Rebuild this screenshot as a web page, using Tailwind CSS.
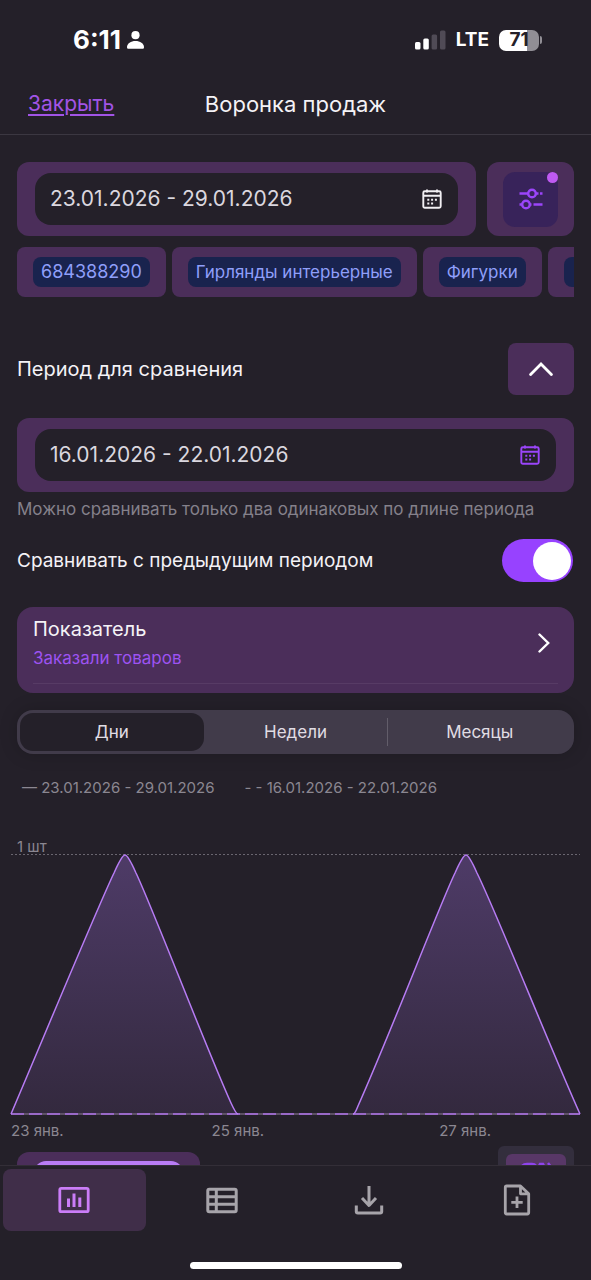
<!DOCTYPE html>
<html lang="ru">
<head>
<meta charset="utf-8">
<meta name="viewport" content="width=device-width, initial-scale=1">
<title>Воронка продаж</title>
<script src="https://cdn.jsdelivr.net/npm/@tailwindcss/browser@4"></script>
</head>
<body class="flex h-screen flex-col overflow-hidden bg-[#242029] font-['Inter','Noto_Sans',sans-serif] text-[20px] leading-6 text-[#f4f2f6]">

<header class="shrink-0 border-b border-[#3b3741]">
  <div class="flex h-20 items-center justify-between pr-[49px] pl-[73px]">
    <div class="flex items-center gap-1.5 text-[26px] font-bold text-white">
      <span>6:11</span>
      <svg class="h-[18px] w-[17px]" viewBox="0 0 17 18" fill="currentColor" aria-hidden="true"><circle cx="8.5" cy="4.2" r="4.1"/><path d="M0 16.2C0 12.500 4 10 8.500 10s8.500 2.500 8.500 6.200c0 1-.6 1.600-1.600 1.600H1.600C.6 17.800 0 17.200 0 16.200z"/></svg>
    </div>
    <div class="flex items-center gap-2.5 text-white">
      <svg class="h-5 w-[31px]" viewBox="0 0 31 20" fill="currentColor" aria-hidden="true"><rect x="0" y="12" width="5.500" height="7.500" rx="1.500"/><rect x="8.300" y="8.500" width="5.500" height="11" rx="1.500"/><g fill="#504b56"><rect x="16.600" y="4.500" width="5.500" height="15" rx="1.500"/><rect x="25" y="0.500" width="5.500" height="19" rx="1.500"/></g></svg>
      <span class="text-[19px] font-bold">LTE</span>
      <div class="flex items-center gap-px">
        <div class="flex h-[21px] w-10 items-center justify-center rounded-[7px] bg-linear-to-r from-white from-71% to-[#918e95] to-71% text-[19px] leading-5 font-bold text-[#242029]">71</div>
        <div class="h-2 w-0.5 rounded-r-full bg-[#918e95]"></div>
      </div>
    </div>
  </div>
  <div class="grid h-[54px] grid-cols-[1fr_auto_1fr] items-start px-7 leading-[48px]">
    <a href="#" class="justify-self-start text-[21px] text-[#a254e6] underline decoration-2 underline-offset-3">Закрыть</a>
    <h1 class="text-[22px]">Воронка продаж</h1>
  </div>
</header>

<main class="flex min-h-0 flex-1 flex-col overflow-hidden px-[17px] pt-[27px]">
  <div class="flex shrink-0 gap-[11px]">
    <div class="flex-1 rounded-xl bg-[#4b2e5a] px-[18px] py-[11px]">
      <div class="flex h-[52px] items-center rounded-2xl bg-[#242029] pr-4 pl-[15px] text-[21px] text-[#dad7df]">
        <input type="text" readonly aria-label="Период" value="23.01.2026 - 29.01.2026" class="min-w-0 flex-1 bg-transparent outline-none">
        <button type="button" aria-label="Открыть календарь" class="text-[#f1eff3]">
          <svg class="size-5" viewBox="0 0 20 20" fill="none" stroke="currentColor" stroke-width="1.900" aria-hidden="true"><rect x="1.300" y="2.300" width="17.400" height="16.400" rx="1.500"/><path d="M1.300 6.800h17.400M5 0.500v3M15 0.500v3"/><path d="M5.300 10.800h2M9.100 10.800h2M12.900 10.800h2M5.300 14.400h2M9.100 14.400h2" stroke-width="2"/></svg>
        </button>
      </div>
    </div>
    <div class="flex w-[87px] items-center justify-center rounded-xl bg-[#4b2e5a]">
      <button type="button" aria-label="Фильтры" class="relative flex size-[55px] items-center justify-center rounded-xl bg-[#38235a] text-[#9b45fa]">
        <svg class="h-[22px] w-6" viewBox="0 0 24 22" fill="none" stroke="currentColor" stroke-width="2.500" aria-hidden="true"><path d="M0.500 5.500H9M17 5.500h2.500M21 5.500h2.500M0.500 16.500H3M11 16.500h1.500M14.500 16.500h9"/><circle cx="13" cy="5.500" r="3.800"/><circle cx="7" cy="16.500" r="3.800"/></svg>
        <span class="absolute top-0 right-0 size-[11px] rounded-full bg-[#bf5af2]"></span>
      </button>
    </div>
  </div>

  <div class="mt-[11px] flex shrink-0 gap-1.5 overflow-hidden text-[17px] leading-[30px] whitespace-nowrap text-[#8f9ffa]">
    <button type="button" class="shrink-0 rounded-lg bg-[#4b2e5a] px-4 py-2.5 text-[18px]"><span class="block rounded-lg bg-[#19234e] px-2">684388290</span></button>
    <button type="button" class="shrink-0 rounded-lg bg-[#4b2e5a] px-4 py-2.5"><span class="block rounded-lg bg-[#19234e] px-2">Гирлянды интерьерные</span></button>
    <button type="button" class="shrink-0 rounded-lg bg-[#4b2e5a] px-4 py-2.5"><span class="block rounded-lg bg-[#19234e] px-2">Фигурки</span></button>
    <button type="button" aria-label="Следующий фильтр" class="shrink-0 rounded-lg bg-[#4b2e5a] px-4 py-2.5"><span class="block h-[30px] w-24 rounded-lg bg-[#19234e]"></span></button>
  </div>

  <div class="mt-[46px] flex shrink-0 items-center justify-between">
    <h2>Период для сравнения</h2>
    <button type="button" aria-label="Свернуть" class="flex h-[52px] w-[66px] items-center justify-center rounded-lg bg-[#4b2e5a] text-white">
      <svg class="h-3.5 w-6" viewBox="0 0 24 14" fill="none" stroke="currentColor" stroke-width="2.800" stroke-linecap="round" aria-hidden="true"><path d="M1.600 12.500 12 2l10.400 10.500"/></svg>
    </button>
  </div>

  <div class="mt-[23px] shrink-0 rounded-xl bg-[#4b2e5a] px-[18px] py-[11px]">
    <div class="flex h-[52px] items-center rounded-2xl bg-[#242029] pr-4 pl-[15px] text-[21px] text-[#dad7df]">
      <input type="text" readonly aria-label="Период для сравнения" value="16.01.2026 - 22.01.2026" class="min-w-0 flex-1 bg-transparent outline-none">
      <button type="button" aria-label="Открыть календарь" class="text-[#9b45fa]">
        <svg class="size-5" viewBox="0 0 20 20" fill="none" stroke="currentColor" stroke-width="1.900" aria-hidden="true"><rect x="1.300" y="2.300" width="17.400" height="16.400" rx="1.500"/><path d="M1.300 6.800h17.400M5 0.500v3M15 0.500v3"/><path d="M5.300 10.800h2M9.100 10.800h2M12.900 10.800h2M5.300 14.400h2M9.100 14.400h2" stroke-width="2"/></svg>
      </button>
    </div>
  </div>
  <p class="mt-[5px] shrink-0 text-[17px] text-[#85818b]">Можно сравнивать только два одинаковых по длине периода</p>

  <div class="mt-[18px] flex shrink-0 items-center justify-between text-[19px]">
    <label for="compare">Сравнивать с предыдущим периодом</label>
    <input id="compare" type="checkbox" role="switch" checked class="mr-px flex h-[43px] w-[71px] appearance-none items-center rounded-full bg-[#514b59] px-0.5 before:size-[38px] before:rounded-full before:bg-white checked:justify-end checked:bg-[#9742ff]">
  </div>

  <button type="button" class="mt-[25px] flex h-[86px] shrink-0 flex-col rounded-2xl bg-[#4b2e5a] px-4 pt-2.5 pb-[9px] text-left">
    <span class="flex w-full flex-1 items-start justify-between border-b border-[#573b65] pr-2">
      <span class="flex flex-col gap-[5px]">
        <span>Показатель</span>
        <span class="text-[17px] text-[#9d53f2]">Заказали товаров</span>
      </span>
      <svg class="mt-4 h-5 w-3" viewBox="0 0 12 20" fill="none" stroke="#fff" stroke-width="2.400" stroke-linecap="round" aria-hidden="true"><path d="m1.500 1.500 8.700 8.500-8.700 8.500"/></svg>
    </span>
  </button>

  <fieldset aria-label="Группировка" class="mt-[17px] grid h-11 shrink-0 grid-cols-3 rounded-2xl bg-[#413b4a] p-[3px] text-center text-[17px] leading-[38px] text-[#e0dde4] shadow-[0_0_18px_#00000030]">
    <label class="relative rounded-[13px] has-checked:bg-[#242029]"><input type="radio" name="group" checked class="absolute inset-0 appearance-none">Дни</label>
    <label class="relative rounded-[13px] has-checked:bg-[#242029]"><input type="radio" name="group" class="absolute inset-0 appearance-none">Недели</label>
    <label class="relative flex items-center rounded-[13px] has-checked:bg-[#242029]"><input type="radio" name="group" class="absolute inset-0 appearance-none"><span class="h-7 w-px bg-[#625d6a]"></span><span class="flex-1">Месяцы</span></label>
  </fieldset>

  <div class="mt-[22px] flex shrink-0 gap-[30px] pl-[5px] text-[15px] text-[#8b8791]">
    <span>— 23.01.2026 - 29.01.2026</span>
    <span>- - 16.01.2026 - 22.01.2026</span>
  </div>

  <figure class="-mx-1.5 mt-9 shrink-0 text-[15px] text-[#8b8791]">
    <div class="h-[18px] pl-1.5 leading-[22px]">1 шт</div>
    <svg class="block h-[262px] w-full overflow-visible" viewBox="0 0 569 262" preserveAspectRatio="none" role="img" aria-label="Заказали товаров по дням">
      <defs><linearGradient id="area" x1="0" y1="0" x2="0" y2="1"><stop offset="0" stop-color="#4e3b67"/><stop offset="1" stop-color="#33293e"/></linearGradient></defs>
      <path d="M0 0.500H569" stroke="#6a6670" stroke-width="1" stroke-dasharray="2 2"/>
      <path d="M0 260C34 180 88 50 103 19Q111 1 114 1Q117 1 125 19C140 50 196 196 220 249Q225 260 227 260H342C344 260 345 257 347 252C380 178 429 50 444 19Q452 1 455 1Q458 1 466 19C484 55 541 198 569 260Z" fill="url(#area)"/>
      <path d="M0 260H569" stroke="#6f6079" stroke-width="1.500"/>
      <path d="M0 260H569" stroke="#ad72e8" stroke-width="1.500" stroke-dasharray="13 5"/>
      <path d="M0 260C34 180 88 50 103 19Q111 1 114 1Q117 1 125 19C140 50 196 196 220 249Q225 260 227 260M342 260C344 260 345 257 347 252C380 178 429 50 444 19Q452 1 455 1Q458 1 466 19C484 55 541 198 569 260" fill="none" stroke="#b77cf4" stroke-width="1.500"/>
    </svg>
    <figcaption class="grid grid-cols-5 pt-[3px]">
      <span class="col-span-2">23 янв.</span><span class="col-span-2 -ml-[27px]">25 янв.</span><span class="-ml-[27px]">27 янв.</span>
    </figcaption>
  </figure>

  <div class="mt-[3px] flex shrink-0 items-start justify-between">
    <div class="mt-1.5 w-[183px] rounded-xl bg-[#4b2e5a] px-[17px] py-[9px]"><div class="h-12 rounded-xl bg-[#b97cf5]"></div></div>
    <div class="w-[76px] rounded-md bg-[#332e3d] p-2">
      <button type="button" aria-label="Показать в процентах" class="flex h-12 w-full justify-center rounded-md bg-[#583767] pt-2 text-[#8f43ed]">
        <svg class="h-6 w-8" viewBox="0 0 32 24" fill="none" stroke="currentColor" stroke-width="2.500" aria-hidden="true"><path d="M2 4Q4 2 7 2h5q3 0 4 2M19 4l1-2h3l1 2M28 1l3 4"/></svg>
      </button>
    </div>
  </div>
</main>

<nav aria-label="Разделы" class="flex h-[115px] shrink-0 flex-col justify-between border-t border-[#332e37] bg-[#242029] pb-[11px] text-[#a7a4aa]">
  <div class="grid grid-cols-4 gap-[5px] px-[3px] pt-[3px]">
    <button type="button" aria-label="График" aria-current="page" class="flex h-[62px] items-center justify-center rounded-lg bg-[#402e49] text-[#cb7df8]">
      <svg class="size-8" viewBox="0 0 32 32" fill="none" stroke="currentColor" stroke-width="2.800" aria-hidden="true"><rect x="1.800" y="4.300" width="28.400" height="23.400" rx="1.500"/><path d="M10.500 23v-8.500M16 23V9.500M21.800 23v-9.500" stroke-width="3"/></svg>
    </button>
    <button type="button" aria-label="Таблица" class="flex h-[62px] items-center justify-center rounded-lg">
      <svg class="size-8" viewBox="0 0 32 32" fill="none" stroke="currentColor" stroke-width="3" aria-hidden="true"><rect x="1.800" y="5.300" width="28.400" height="22.400" rx="1.500"/><path d="M1.800 12.700h28.400M1.800 20.200h28.400M10.300 5.300v22.400"/></svg>
    </button>
    <button type="button" aria-label="Скачать" class="flex h-[62px] items-center justify-center rounded-lg">
      <svg class="size-8" viewBox="0 0 32 32" fill="none" stroke="currentColor" stroke-width="3" stroke-linejoin="round" aria-hidden="true"><path d="M16 2v19M9 14l7 7.500 7-7.500M3.300 21.500v6q0 1.500 1.500 1.500h22.400q1.500 0 1.500-1.500v-6"/></svg>
    </button>
    <button type="button" aria-label="Создать отчёт" class="flex h-[62px] items-center justify-center rounded-lg">
      <svg class="size-8" viewBox="0 0 32 32" fill="none" stroke="currentColor" stroke-width="2.800" stroke-linejoin="round" aria-hidden="true"><path d="M19.500 2H5.700Q4.300 2 4.300 3.400v25.200Q4.300 30 5.700 30h20.600q1.400 0 1.400-1.400V9.800zM19.500 2v7.800h8.200M16 12.500v11.500M10.300 18.300h11.400"/></svg>
    </button>
  </div>
  <div class="mx-auto h-[7px] w-[212px] rounded-full bg-white"></div>
</nav>
</body>
</html>
